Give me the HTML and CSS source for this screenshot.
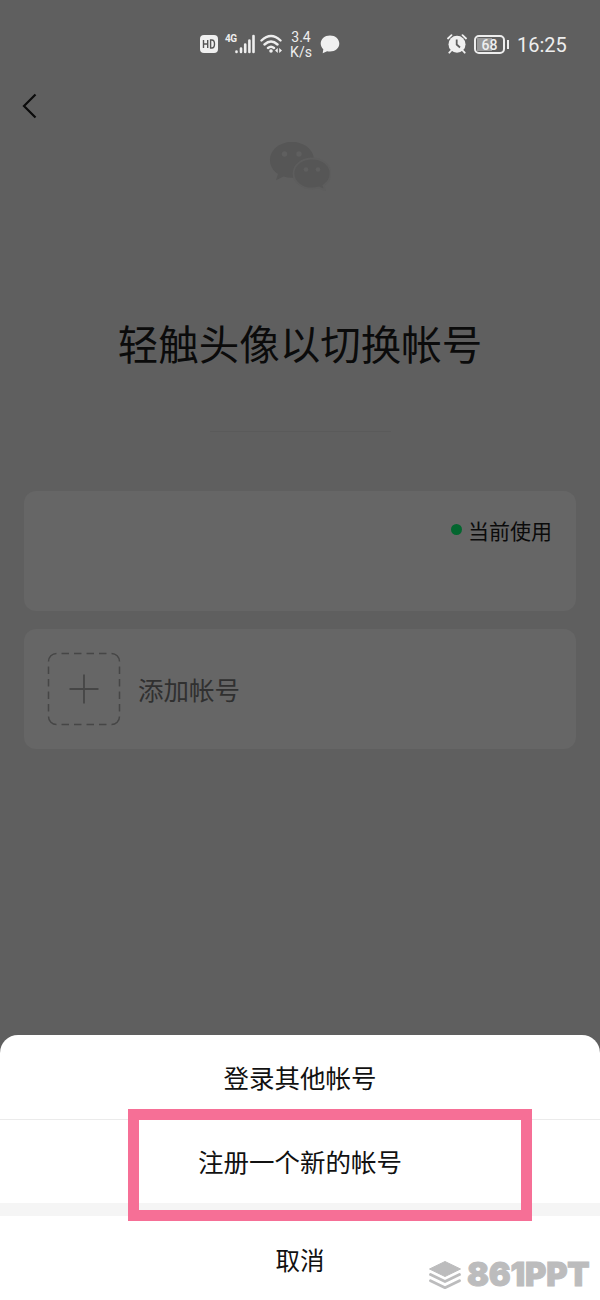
FILE: index.html
```html
<!DOCTYPE html>
<html lang="zh-CN">
<head>
<meta charset="utf-8">
<title>切换帐号</title>
<link rel="stylesheet" href="styles.css">
</head>
<body>
<div class="screen">
  <header class="status">
    <div class="status-left">
      <svg class="hd" width="18" height="18" viewBox="0 0 18 18"><rect width="18" height="18" rx="4" fill="#f0f0f0"/><path d="M3.500 5v8M7.700 5v8M3.500 9h4.200M10.600 5v8h1.200c3.600 0 3.600-8 0-8z" fill="none" stroke="#555" stroke-width="1.400"/></svg>
      <span class="gen">4G</span>
      <svg class="signal" width="20" height="20" viewBox="0 0 20 20" stroke="#eee" stroke-width="2.600" stroke-linecap="round"><path d="M1.500 17.500v.5M6 14.500V18M10.200 10.500V18M14.400 6.500V18M18.500 2V18"/></svg>
      <svg class="wifi" width="24" height="20" viewBox="0 0 24 20" fill="none" stroke="#eee" stroke-width="2.400" stroke-linecap="round"><path d="M1.500 6.500Q11 -2.500 20.500 6.500M4.500 10.500Q11 4.500 17.500 10.500M8 14Q11 11.400 14 14"/><circle cx="11" cy="17" r="1.800" fill="#eee" stroke="none"/><path d="M17.800 14 15 16.500 17.800 19zM19.200 14 22 16.500 19.200 19z" fill="#eee" stroke="none"/></svg>
      <span class="speed">3.4<br>K/s</span>
      <svg class="chat" width="20" height="19" viewBox="0 0 20 19"><path d="M10 .5C15.300.5 19.300 4 19.300 8.600s-4 8-9.300 8c-1 0-2-.1-2.900-.4L2.700 18.300l.6-4C1.600 12.800.7 10.800.7 8.600.7 4 4.700.5 10 .5z" fill="#f0f0f0"/></svg>
    </div>
    <div class="status-right">
      <svg class="alarm" width="20" height="20" viewBox="0 0 20 20"><circle cx="10" cy="10.300" r="8.500" fill="#f0f0f0"/><path d="M1 4.500 4.500 1.200M15.500 1.200 19 4.500M4.300 16.500 2.300 18.700M15.700 16.500l2 2.200" stroke="#f0f0f0" stroke-width="1.800" stroke-linecap="round"/><path d="M9.700 5.500V10.500L13 13.500" fill="none" stroke="#5f5f5f" stroke-width="1.800"/></svg>
      <span class="battery">68</span><span class="battery-tip"></span>
      <span class="time">16:25</span>
    </div>
  </header>
  <nav class="nav"><svg width="16" height="28" viewBox="0 0 16 28"><path d="M14.500 2.500 3 14 14.500 25.500" fill="none" stroke="#0b0b0b" stroke-width="2.200"/></svg></nav>
  <main class="content">
    <svg class="logo" width="62" height="50" viewBox="0 0 62 50">
      <path d="M23 1C10.500 1 1 9 1 19c0 5.800 3 10.700 8 14L7 39.300l7.500-3.800c2.800.8 5.500 1.200 8.500 1.200 12.500 0 22-8 22-17.800S35.500 1 23 1z" fill="#565656"/>
      <path d="M43 17.500c-10.300 0-18.500 6.700-18.500 15S32.700 47.500 43 47.500c2.500 0 4.800-.4 7-1.100l6 3-1.500-5c4.300-2.800 7-7.100 7-11.900 0-8.300-8.200-15-18.500-15z" fill="#565656" stroke="#5d5d5d" stroke-width="1.800"/>
      <g fill="#5f5f5f"><circle cx="15.500" cy="13" r="2.700"/><circle cx="30" cy="13" r="2.700"/><circle cx="37" cy="28.500" r="2.300"/><circle cx="49" cy="28.500" r="2.300"/></g>
    </svg>
    <h1 class="title">轻触头像以切换帐号</h1>
    <div class="rule"></div>
    <section class="card current"><span class="dot"></span><span>当前使用</span></section>
    <section class="card add">
      <svg width="74" height="74" viewBox="0 0 74 74" fill="none" stroke="#464646"><path d="M1.500 9.500a8 8 0 0 1 8-8M64.500 1.500a8 8 0 0 1 8 8M72.500 64.500a8 8 0 0 1-8 8M9.500 72.500a8 8 0 0 1-8-8" stroke-width="1.500"/><path d="M14.500 1.500h46M14.500 72.500h46M1.500 14.500v46M72.500 14.500v46" stroke-width="1.500" stroke-dasharray="7.500 5"/><path d="M37 22.500v29M22.500 37h29" stroke-width="1.800"/></svg>
      <span>添加帐号</span>
    </section>
  </main>
  <footer class="sheet">
    <div class="option first">登录其他帐号</div>
    <div class="option second">注册一个新的帐号</div>
    <div class="gap"></div>
    <div class="option cancel">取消</div>
    <div class="highlight"></div>
    <div class="brand">
      <svg width="32" height="29" viewBox="0 0 32 29"><path d="M16 .5 31.500 8 16 15.500.5 8z" fill="#bcbcbd" stroke="#bcbcbd" stroke-linejoin="round"/><path d="M1.500 13.500 16 20.500l14.500-7M1.500 19.700 16 26.700l14.500-7" fill="none" stroke="#bcbcbd" stroke-width="2.800" stroke-linejoin="round" stroke-linecap="round"/></svg>
      <span class="brand-text">861PPT</span>
    </div>
  </footer>
</div>
</body>
</html>
```
FILE: styles.css
```css
* { box-sizing: border-box; }
body { margin: 0; }
.screen {
  width: 600px; height: 1300px; overflow: hidden;
  display: flex; flex-direction: column;
  background: #5f5f5f; color: #0b0b0b;
  font-family: "Noto Sans CJK SC", sans-serif;
}
.status {
  height: 88px; padding: 0 33px 0 200px;
  display: flex; align-items: center; justify-content: space-between;
  color: #eee;
}
.status-left, .status-right { display: flex; align-items: center; }
.gen { font: 700 10px/12px Roboto, sans-serif; margin: 0 0 11px 7px; width: 11px; letter-spacing: -.5px; }
.signal { margin-left: -1px; margin-right: 5px; }
.wifi { margin-right: 6px; }
.speed { width: 22px; font: 14px/15px Roboto, sans-serif; text-align: center; white-space: nowrap; padding-top: 1px; }
.chat { margin-left: 8px; margin-top: 1px; }
.alarm { margin-right: 7px; }
.battery {
  width: 31px; height: 19px; border: 2px solid #eee; border-radius: 5px;
  background: linear-gradient(90deg, #999 60%, #5f5f5f 60%) 1px 1px / 25px 13px no-repeat;
  font: 500 14px/16px Roboto, sans-serif; text-align: center;
}
.battery-tip { width: 2px; height: 9px; margin: 0 8px 0 2px; background: #eee; }
.time { font: 20px/24px Roboto, sans-serif; padding-top: 2px; width: 50px; white-space: nowrap; }
.nav { height: 36px; padding: 4px 0 0 21px; }
.content { flex: 1; padding: 17px 24px 0; display: flex; flex-direction: column; align-items: center; }
.logo { flex: none; }
.title { margin: 122px 0 0; font-weight: 400; font-size: 40.500px; line-height: 60px; white-space: nowrap; }
.rule { width: 181px; height: 1px; margin: 58px 0 59px; background: #5a5a5a; }
.card { width: 552px; height: 120px; flex: none; border-radius: 12px; background: #666; }
.current {
  padding: 24px 24px 0; display: flex; justify-content: flex-end;
  font-size: 21px; line-height: 30px;
}
.dot { width: 11px; height: 11px; border-radius: 50%; margin: 9px 6px 0 0; background: #03662f; }
.add {
  margin-top: 18px; padding-left: 23px; display: flex; align-items: center; gap: 17px;
  color: #303030; font-size: 25.500px;
}
.add span { padding-bottom: 2px; }
.sheet { position: relative; height: 265px; background: #fff; border-radius: 18px 18px 0 0; color: #111; }
.option {
  height: 84px; display: flex; align-items: center; justify-content: center;
  font-size: 25.500px; line-height: 38px;
}
.first { height: 85px; border-bottom: 1px solid #ebebeb; }
.second { height: 83px; padding-bottom: 1px; }
.gap { height: 13px; background: #f5f5f5; }
.cancel { font-size: 24.500px; padding-top: 3px; }
.highlight { position: absolute; left: 128px; top: 74px; width: 404px; height: 112px; border: 11px solid #f66f96; }
.brand { position: absolute; left: 429px; top: 220px; display: flex; align-items: center; gap: 6px; }
.brand-text { font: 900 32.500px/40px Inter, sans-serif; color: #bcbcbd; -webkit-text-stroke: 1px #bcbcbd; letter-spacing: -.2px; white-space: nowrap; }
```
